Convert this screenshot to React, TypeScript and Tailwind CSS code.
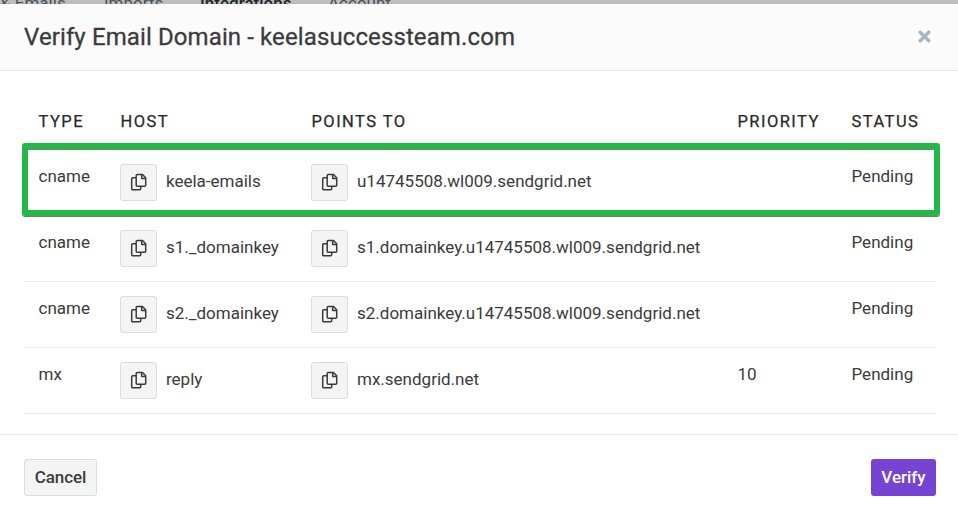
import React from "react";

const records = [
  { type: "cname", host: "keela-emails", target: "u14745508.wl009.sendgrid.net", priority: "" },
  { type: "cname", host: "s1._domainkey", target: "s1.domainkey.u14745508.wl009.sendgrid.net", priority: "" },
  { type: "cname", host: "s2._domainkey", target: "s2.domainkey.u14745508.wl009.sendgrid.net", priority: "" },
  { type: "mx", host: "reply", target: "mx.sendgrid.net", priority: "10" },
];

const columns = "grid grid-cols-[82px_191px_426px_114px_1fr]";

function CopyValue({ value }: { value: string }) {
  return (
    <div className="-ml-px flex items-center gap-[9px]">
      <button aria-label="Copy" className="flex h-[37px] w-[37px] shrink-0 items-center justify-center rounded-[3px] border border-[#dadce2] bg-[#f4f4f5]">
        <svg className="-translate-y-px" width="17" height="18" viewBox="0 0 17 18" fill="none" stroke="#3a3a3a" strokeWidth="1.5" strokeLinejoin="round">
          <path d="M7.2 1.5h5.3l3.2 3.2v7.6a1 1 0 0 1-1 1H7.2a1 1 0 0 1-1-1V2.5a1 1 0 0 1 1-1z" />
          <path d="M11.7 1.6v3.8h3.9" />
          <path d="M6 4.8H2.7a1 1 0 0 0-1 1v9.9a1 1 0 0 0 1 1h7a1 1 0 0 0 1-1v-2.2" />
        </svg>
      </button>
      <span className="-mt-[2px] whitespace-nowrap">{value}</span>
    </div>
  );
}

export default function App() {
  return (
    <div className="flex h-[520px] w-[958px] flex-col overflow-hidden bg-white font-[Roboto,sans-serif] text-[#3b3b3b]">
      <div className="h-1 shrink-0 overflow-hidden bg-[#bcbdbf] text-[17px] leading-[19px] text-[#495057]">
        <div className="-mt-[6px] flex whitespace-nowrap">
          <span className="w-[104px]">&amp; Emails</span>
          <span className="w-24">Imports</span>
          <span className="w-32 font-medium text-[#212529]">Integrations</span>
          <span>Account</span>
        </div>
      </div>
      <header className="flex h-[67px] shrink-0 items-center justify-between border-b border-[#e9e9e9] bg-[#fbfbfb] pl-6 pr-[22px]">
        <h1 className="text-2xl tracking-[0.11px] [-webkit-text-stroke:0.3px]">Verify Email Domain - keelasuccessteam.com</h1>
        <button aria-label="Close" className="-mt-[2px] mr-[5px]">
          <svg width="13" height="13" viewBox="0 0 12 12" stroke="#adb5bd" strokeWidth="3.2" strokeLinecap="round"><path d="M2 2l8 8M10 2L2 10" /></svg>
        </button>
      </header>
      <main className="h-[363px] shrink-0 pl-6 pr-[22px] pt-[40px] text-[17px]">
        <div className={`${columns} h-9 pl-[14.5px] pt-px text-[16.5px] leading-5 tracking-[1.45px] text-[#292929] [-webkit-text-stroke:0.25px]`}>
          <span>TYPE</span><span>HOST</span><span>POINTS TO</span><span>PRIORITY</span><span>STATUS</span>
        </div>
        {records.map((r, i) => (
          <div key={r.host} className={i === 0 ? "-ml-[2px] -mr-[4px] -mt-[4px] h-[73px] rounded-[3px] border-[6px] border-[#23b946] pt-px shadow-[inset_0_1px_0_#6f8373,0_1px_0_#6f8373]" : "h-[66px] border-b border-[#e9e9e9]"}>
            <div className={`${columns} pt-[14px] ${i === 0 ? "pl-[11px]" : "pl-[15px]"}`}>
              <span className="-ml-[0.5px] -mt-[3px] leading-[30px]">{r.type}</span>
              <CopyValue value={r.host} />
              <CopyValue value={r.target} />
              <span className="-ml-[0.5px] -mt-[3px] leading-[30px]">{r.priority}</span>
              <span className="-ml-[0.5px] -mt-[3px] leading-[30px]">Pending</span>
            </div>
          </div>
        ))}
      </main>
      <footer className="flex h-[86px] shrink-0 items-center justify-between border-t border-[#e9e9e9] pl-6 pr-[22px] text-[17px]">
        <button className="h-[37px] w-[73px] rounded-[3px] border border-[#dadce2] bg-[#f4f4f5] pt-px font-medium tracking-[-0.1px]">Cancel</button>
        <button className="h-[37px] w-[65px] rounded-[3px] bg-[#7643d2] pt-px font-medium text-white">Verify</button>
      </footer>
    </div>
  );
}
